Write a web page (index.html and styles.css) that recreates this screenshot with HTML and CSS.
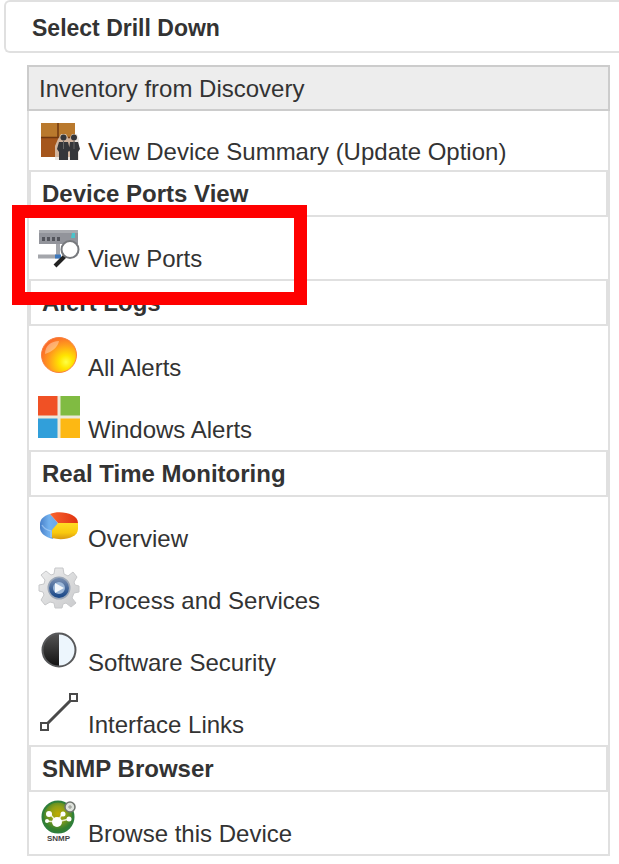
FILE: index.html
```html
<!DOCTYPE html>
<html lang="en">
<head>
    <meta charset="UTF-8">
    <meta name="viewport" content="width=device-width, initial-scale=1.0">
    <title>Select Drill Down</title>
    <link rel="stylesheet" href="styles.css">
</head>
<body>

    <div class="panel-title">
        <h1>Select Drill Down</h1>
    </div>

    <div class="drill-list">
        <h2 class="list-header">Inventory from Discovery</h2>
        <ul class="group group-first">
            <li>
                <a class="item" href="#">
                    <svg class="icon" viewBox="0 0 42 42">
                        <rect x="3" y="5" width="34" height="34" fill="#a5561c"/>
                        <rect x="3" y="5" width="34" height="14" fill="#b9792d"/>
                        <path d="M3 19.500h34M20 5v14" stroke="#70370f" stroke-width="1.500"/>
                        <path d="M20 21l3-5h5l3 5 3-5h5l2 5v21H17V28z" fill="#e4ddd6" opacity=".7"/>
                        <g fill="#35363a">
                            <circle cx="25.500" cy="19.500" r="3"/>
                            <circle cx="36" cy="19.500" r="3"/>
                            <path d="M21 24h9l2 8-2 2v8h-9v-8l-2-3zM32 24h8l2 7-2 3v8h-8v-8l-1-2z"/>
                        </g>
                        <path d="M25.500 23v8M36 23v8" stroke="#666" stroke-width="1"/>
                    </svg>
                    <span>View Device Summary (Update Option)</span>
                </a>
            </li>
        </ul>

        <h3 class="group-title">Device Ports View</h3>
        <ul class="group">
            <li class="highlighted">
                <a class="item" href="#">
                    <svg class="icon" viewBox="0 0 42 42">
                        <rect x="1" y="5" width="39" height="14" fill="#92949b"/>
                        <rect x="1" y="5" width="39" height="3" fill="#a9abb0"/>
                        <path d="M4 14h20" stroke="#53555c" stroke-width="4" stroke-dasharray="3 2"/>
                        <path d="M34 8h3v5h-4z" fill="#4cc4cb"/>
                        <path d="M20 19v11M0 31.500h22" stroke="#a4a6ab" stroke-width="4" fill="none"/>
                        <path d="M17 31.500h6" stroke="#3c78bd" stroke-width="4"/>
                        <path d="M27 31l-10 10" stroke="#222" stroke-width="4"/>
                        <circle cx="32" cy="24.500" r="8.500" fill="#fff" stroke="#77797d" stroke-width="2"/>
                    </svg>
                    <span>View Ports</span>
                </a>
            </li>
        </ul>

        <h3 class="group-title">Alert Logs</h3>
        <ul class="group">
            <li>
                <a class="item" href="#">
                    <svg class="icon" viewBox="0 0 42 42">
                        <defs>
                            <radialGradient id="sun" cx=".7" cy=".7" r=".75">
                                <stop offset="0" stop-color="#ffff45"/>
                                <stop offset=".25" stop-color="#ffe500"/>
                                <stop offset=".65" stop-color="#ff9d1c"/>
                                <stop offset="1" stop-color="#fb6a2a"/>
                            </radialGradient>
                        </defs>
                        <circle cx="21" cy="21" r="17.500" fill="url(#sun)" stroke="#f9803d"/>
                        <path d="M7 20C7 12 13 7 21 7c-1 6-7 11-14 13z" fill="#fff" opacity=".35"/>
                    </svg>
                    <span>All Alerts</span>
                </a>
            </li>
            <li>
                <a class="item" href="#">
                    <svg class="icon" viewBox="0 0 42 42">
                        <rect width="42" height="42" fill="#eee8d8"/>
                        <rect width="19.500" height="19.500" fill="#f05125"/>
                        <rect x="22.500" width="19.500" height="19.500" fill="#80bb42"/>
                        <rect y="22.500" width="19.500" height="19.500" fill="#319fda"/>
                        <rect x="22.500" y="22.500" width="19.500" height="19.500" fill="#fdb813"/>
                    </svg>
                    <span>Windows Alerts</span>
                </a>
            </li>
        </ul>

        <h3 class="group-title">Real Time Monitoring</h3>
        <ul class="group">
            <li>
                <a class="item" href="#">
                    <svg class="icon" viewBox="0 0 42 42">
                        <defs>
                            <linearGradient id="pieBlue">
                                <stop offset="0" stop-color="#477fc9"/>
                                <stop offset=".5" stop-color="#72b1ee"/>
                                <stop offset="1" stop-color="#69a7e8"/>
                            </linearGradient>
                            <linearGradient id="pieRed">
                                <stop offset="0" stop-color="#f9642e"/>
                                <stop offset="1" stop-color="#df3210"/>
                            </linearGradient>
                            <linearGradient id="pieYellow" x2="0" y2="1">
                                <stop offset="0" stop-color="#ffdc24"/>
                                <stop offset=".6" stop-color="#f9c90e"/>
                                <stop offset="1" stop-color="#d99913"/>
                            </linearGradient>
                        </defs>
                        <path d="M20 18L12 9C5 11 2 15 2 19v4c0 5 5 9 13 11z" fill="url(#pieBlue)"/>
                        <path d="M20 18L12 9c9-4 28-1 28 9z" fill="url(#pieRed)"/>
                        <path d="M20 18h20v6c0 9-15 12-26 9v-8z" fill="url(#pieYellow)"/>
                        <path d="M4 20c2 4 5 5 9 6v6" stroke="#c6e2ff" stroke-width="1.500" fill="none" opacity=".5"/>
                    </svg>
                    <span>Overview</span>
                </a>
            </li>
            <li>
                <a class="item" href="#">
                    <svg class="icon" viewBox="0 0 42 42">
                        <defs>
                            <linearGradient id="gear" x2="1" y2="1">
                                <stop offset="0" stop-color="#eeeeee"/>
                                <stop offset="1" stop-color="#c9cacc"/>
                            </linearGradient>
                            <linearGradient id="hub" x2="0" y2="1">
                                <stop offset="0" stop-color="#6f87ac"/>
                                <stop offset="1" stop-color="#1f4c8b"/>
                            </linearGradient>
                        </defs>
                        <path d="M17 1h8l1 6 4 2 5-4 4 5-3 5 1 3 4 1v6l-5 1-2 5 4 5-5 4-5-4-3 1-1 4h-7l-1-5-4-1-5 3-4-5 3-5-1-3-4-1v-6l5-1 1-4-4-5 5-4 5 4 3-1z" fill="url(#gear)" stroke="#c7c8ca"/>
                        <circle cx="21" cy="21" r="10" fill="#d7e2ef" stroke="#9aa6b7" stroke-width="3"/>
                        <circle cx="21" cy="21" r="8" fill="#9db8d8" stroke="url(#hub)" stroke-width="4"/>
                        <path d="M17 16l9 5-9 5z" fill="#f3f7fb"/>
                    </svg>
                    <span>Process and Services</span>
                </a>
            </li>
            <li>
                <a class="item" href="#">
                    <svg class="icon" viewBox="0 0 42 42">
                        <defs>
                            <linearGradient id="dark" x2="0" y2="1">
                                <stop offset="0" stop-color="#555555"/>
                                <stop offset="1" stop-color="#111111"/>
                            </linearGradient>
                        </defs>
                        <circle cx="21" cy="21" r="16.500" fill="#edf6fd"/>
                        <path d="M21 4.500a16.500 16.500 0 0 0 0 33z" fill="url(#dark)"/>
                        <circle cx="21" cy="21" r="16.500" fill="none" stroke="#58595b" stroke-width="2"/>
                    </svg>
                    <span>Software Security</span>
                </a>
            </li>
            <li>
                <a class="item" href="#">
                    <svg class="icon" viewBox="0 0 42 42">
                        <path d="M8 34L34 8" stroke="#4a4a4a" stroke-width="3"/>
                        <g fill="#fff" stroke="#4a4a4a" stroke-width="2">
                            <rect x="3" y="32" width="7" height="7"/>
                            <rect x="32" y="3" width="7" height="7"/>
                        </g>
                    </svg>
                    <span>Interface Links</span>
                </a>
            </li>
        </ul>

        <h3 class="group-title">SNMP Browser</h3>
        <ul class="group">
            <li>
                <a class="item" href="#">
                    <svg class="icon" viewBox="0 0 42 42">
                        <defs>
                            <radialGradient id="globe" cx=".5" cy=".4" r=".5">
                                <stop offset="0" stop-color="#c1ac00"/>
                                <stop offset=".5" stop-color="#8d9f18"/>
                                <stop offset="1" stop-color="#34802f"/>
                            </radialGradient>
                        </defs>
                        <circle cx="20" cy="17" r="15.500" fill="url(#globe)" stroke="#2f7f3c" stroke-width="2"/>
                        <path d="M19 22L11 13M19 22l6-9M19 22L8 21M19 22l12-3" stroke="#e9efcf" stroke-width="1.500"/>
                        <g fill="#fff">
                            <circle cx="19" cy="22" r="5"/>
                            <circle cx="11" cy="14" r="3"/>
                            <circle cx="25" cy="14" r="2.500"/>
                            <circle cx="9" cy="21" r="2"/>
                            <circle cx="31" cy="19" r="2.500"/>
                        </g>
                        <circle cx="32" cy="7" r="5" fill="#dfe3dd" stroke="#6f746f" stroke-width="1.500"/>
                        <path d="M32 5v4M30 7h4" stroke="#92968f"/>
                        <text class="icon-text" x="20.500" y="41" text-anchor="middle">SNMP</text>
                    </svg>
                    <span>Browse this Device</span>
                </a>
            </li>
        </ul>
    </div>

</body>
</html>
```

FILE: styles.css
```css
* {
    box-sizing: border-box;
}
body {
    margin: 0;
    background-color: #fff;
    color: #333;
    font-family: "Liberation Sans", Arial, sans-serif;
    font-size: 24px;
    line-height: 28px;
}
h1,
h2,
h3,
ul {
    margin: 0;
    padding: 0;
    font-size: 24px;
}
ul {
    list-style: none;
}
.panel-title {
    margin-left: 4px;
    padding: 12px 26px 9px;
    border: 2px solid #e0e0e0;
    border-right: none;
    border-radius: 6px 0 0 6px;
}
.panel-title h1 {
    font-size: 23px;
}
.drill-list {
    margin: 12px 9px 8px 27px;
    border: 2px solid #e0e0e0;
    border-top: none;
}
.list-header {
    margin: 0 -2px;
    padding: 8px 10px 6px;
    border: 2px solid #ccc;
    background-color: #ededed;
    font-weight: normal;
}
.group-title {
    padding: 8px 11px 7px;
    border: 2px solid #e0e0e0;
}
.item {
    display: flex;
    align-items: baseline;
    gap: 8px;
    min-height: 62px;
    padding: 8px 9px 0;
    color: #333;
    text-decoration: none;
}
.group-first .item {
    min-height: 59px;
    padding-top: 7px;
}
.icon {
    flex: none;
    width: 42px;
    height: 42px;
    overflow: visible;
}
.icon-text {
    fill: #444;
    font-size: 8px;
    font-weight: bold;
}

/* red frame around the ports link */
.highlighted {
    position: relative;
}
.highlighted::after {
    content: "";
    position: absolute;
    top: -12px;
    bottom: -26px;
    left: -17px;
    box-sizing: border-box;
    width: 295px;
    border: 13px solid #f00;
    pointer-events: none;
}
```
